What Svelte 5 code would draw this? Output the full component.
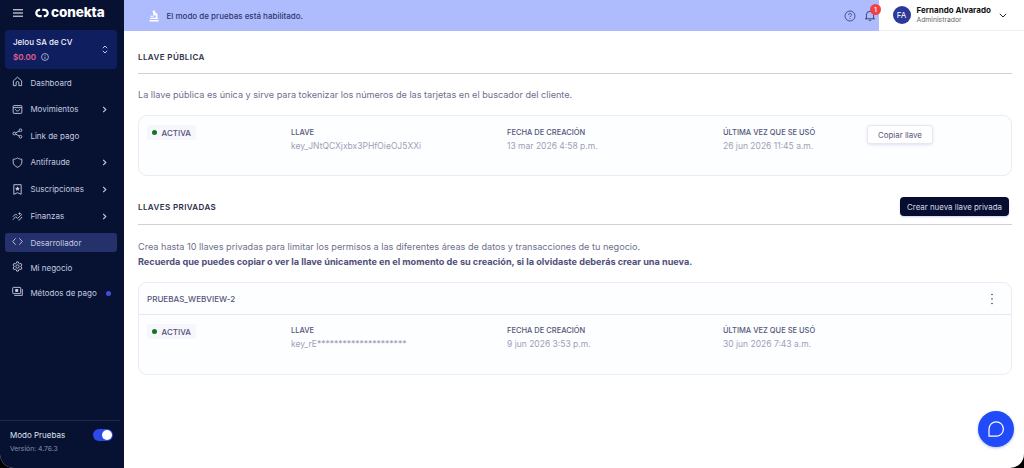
<script lang="ts">
    type NavItem = { label: string; icon: string; submenu?: boolean; active?: boolean; dot?: boolean };

    const navItems: NavItem[] = [
        { label: "Dashboard", icon: "home" },
        { label: "Movimientos", icon: "inbox", submenu: true },
        { label: "Link de pago", icon: "share" },
        { label: "Antifraude", icon: "shield", submenu: true },
        { label: "Suscripciones", icon: "bookmark", submenu: true },
        { label: "Finanzas", icon: "finance", submenu: true },
        { label: "Desarrollador", icon: "code", active: true },
        { label: "Mi negocio", icon: "gear" },
        { label: "Métodos de pago", icon: "cash", dot: true },
    ];

    const publicKey = {
        key: "key_JNtQCXjxbx3PHfOieOJ5XXi",
        created: "13 mar 2026 4:58 p.m.",
        lastUsed: "26 jun 2026 11:45 a.m.",
    };

    const privateKey = {
        name: "PRUEBAS_WEBVIEW-2",
        key: "key_rE*********************",
        created: "9 jun 2026 3:53 p.m.",
        lastUsed: "30 jun 2026 7:43 a.m.",
    };

    let testMode = $state(true);
</script>

{#snippet navIcon(name: string)}
    <svg class="nav-icon {name}" viewBox="0 0 24 24">
        {#if name === "home"}
            <path d="M3 10.5 12 2.5l9 8V21h-6v-6a3 3 0 0 0-6 0v6H3z" />
        {:else if name === "inbox"}
            <rect x="2.5" y="3.5" width="19" height="17" rx="2" />
            <path d="M2.5 8h19M7.500 11.500c.5 5 8.500 5 9 0" />
        {:else if name === "share"}
            <circle cx="5" cy="12" r="3" />
            <circle cx="18.500" cy="5" r="3" />
            <circle cx="18.500" cy="19" r="3" />
            <path d="m8 10.500 8-4M8 13.500l8 4" />
        {:else if name === "shield"}
            <path d="M12 2c3 2.200 6 2.800 9.500 3v6c0 5.500-4 9-9.500 11.500C6.500 20 2.500 16.500 2.500 11V5C6 4.800 9 4.200 12 2z" />
        {:else if name === "bookmark"}
            <path d="M4 1.500h16v21l-8-3.500-8 3.500z" />
            <path class="solid" d="m12 5 1.600 3.300 3.600.5-2.600 2.500.6 3.600-3.200-1.700-3.200 1.700.6-3.600-2.600-2.500 3.600-.5z" />
        {:else if name === "finance"}
            <path d="m2 19 6-6.500 4.500 3.500L22 7M2 12.500l6-6 3.500 3.500M14 20l3-1 5-6" />
            <path d="M16.500 3v5M14 5.500h5" />
        {:else if name === "code"}
            <path d="m8 5-6.500 7L8 19M16 5l6.500 7-6.500 7" />
        {:else if name === "gear"}
            <path d="m10 2-.6 3-2.300 1.300-2.900-1-2 3.500 2.300 2V13.200l-2.300 2 2 3.500 2.900-1L9.400 19l.6 3h4l.6-3 2.300-1.300 2.900 1 2-3.500-2.300-2v-2.400l2.300-2-2-3.500-2.900 1L14.600 5 14 2z" />
            <circle cx="12" cy="12" r="3.600" />
        {:else if name === "cash"}
            <rect x="1.500" y="3" width="17.500" height="13.500" rx="1.500" />
            <path d="M22.500 6.500V20.500H5" />
            <rect class="solid" x="7" y="6.500" width="6.500" height="6.500" rx="1" />
        {/if}
    </svg>
{/snippet}

{#snippet keyDetails(item: { key: string; created: string; lastUsed: string })}
    <div><span class="badge"><i></i>ACTIVA</span></div>
    <dl>
        <dt>LLAVE</dt>
        <dd>{item.key}</dd>
    </dl>
    <dl>
        <dt>FECHA DE CREACIÓN</dt>
        <dd>{item.created}</dd>
    </dl>
    <dl>
        <dt>ÚLTIMA VEZ QUE SE USÓ</dt>
        <dd>{item.lastUsed}</dd>
    </dl>
{/snippet}

<div class="app">
    <aside>
        <div class="brand">
            <svg class="menu" viewBox="0 0 10 8"><path d="M0 .8h10M0 4h10M0 7.200h10" /></svg>
            <svg class="mark" viewBox="0 0 13 9">
                <path d="M4.800 1.600H4.100a2.900 2.900 0 0 0 0 5.800H6.200M8.200 7.400h.7a2.900 2.900 0 0 0 0-5.800H6.800" />
            </svg>
            <span class="logo">conekta</span>
        </div>

        <div class="account">
            <div>
                <div class="company">Jelou SA de CV</div>
                <div class="balance">
                    $0.00
                    <svg viewBox="0 0 10 10"><circle cx="5" cy="5" r="4.300" /><path d="M5 4.500v3M5 2.500v1" /></svg>
                </div>
            </div>
            <svg class="sort" viewBox="0 0 6 9"><path d="M.8 3.200 3 1l2.200 2.200M.8 5.800 3 8l2.200-2.200" /></svg>
        </div>

        <nav>
            {#each navItems as item}
                <div class="nav-item" class:active={item.active}>
                    {@render navIcon(item.icon)}
                    <span class="nav-label">{item.label}</span>
                    {#if item.submenu}
                        <svg class="chevron" viewBox="0 0 5 8"><path d="m1 1 3 3-3 3" /></svg>
                    {/if}
                    {#if item.dot}<i class="dot"></i>{/if}
                </div>
            {/each}
        </nav>

        <footer>
            <div>
                <div class="mode">Modo Pruebas</div>
                <div class="version">Versión: 4.76.3</div>
            </div>
            <button
                class="toggle"
                class:on={testMode}
                aria-label="Modo Pruebas"
                onclick={() => (testMode = !testMode)}
            ></button>
        </footer>
    </aside>

    <main>
        <header>
            <div class="banner">
                <svg class="scope" viewBox="0 0 10 12">
                    <path d="M3.500 1 5.500.2l1.200 2.600c1.800.7 2.600 3.200 1.200 5H9.300V9H1V7.800h5c1.100-.7 1.300-2 .5-2.900L4.700 6z" />
                    <path d="M.5 10h9v1.500h-9zM1.500 5.700h3v1h-3z" />
                </svg>
                <span class="banner-text">El modo de pruebas está habilitado.</span>
                <svg class="help" viewBox="0 0 12 12">
                    <circle cx="6" cy="6" r="5" />
                    <path d="M4.500 4.900C4.500 2.700 7.600 2.900 7.500 4.800 7.400 5.800 6 5.900 6 7.100M6 8.200v.8" />
                </svg>
                <div class="bell">
                    <svg viewBox="0 0 12 12">
                        <path d="M1 9.300h10M2.400 9.300V5.400a3.600 3.600 0 0 1 7.200 0v3.900M4.800 10.800h2.400" />
                    </svg>
                    <span class="count">1</span>
                </div>
            </div>
            <div class="user">
                <div class="avatar">FA</div>
                <div class="who">
                    <div class="name">Fernando Alvarado</div>
                    <div class="role">Administrador</div>
                </div>
                <svg class="down" viewBox="0 0 8 5"><path d="m.8.8 3.200 3.200L7.200.8" /></svg>
            </div>
        </header>

        <div class="content">
            <div class="section-head public">
                <h2>LLAVE PÚBLICA</h2>
            </div>
            <p class="public-text">
                La llave pública es única y sirve para tokenizar los números de las tarjetas en el buscador del cliente.
            </p>
            <div class="card">
                <div class="key-row public-row">
                    {@render keyDetails(publicKey)}
                    <div><button class="copy">Copiar llave</button></div>
                </div>
            </div>

            <div class="section-head private">
                <h2>LLAVES PRIVADAS</h2>
                <button class="create">Crear nueva llave privada</button>
            </div>
            <p class="private-text">
                Crea hasta 10 llaves privadas para limitar los permisos a las diferentes áreas de datos y transacciones de tu negocio.
                <strong>Recuerda que puedes copiar o ver la llave únicamente en el momento de su creación, si la olvidaste deberás crear una nueva.</strong>
            </p>
            <div class="card">
                <div class="card-head">
                    <span>{privateKey.name}</span>
                    <svg class="more" viewBox="0 0 4 12">
                        <circle cx="2" cy="1.500" r=".8" /><circle cx="2" cy="6" r=".8" /><circle cx="2" cy="10.500" r=".8" />
                    </svg>
                </div>
                <div class="key-row">
                    {@render keyDetails(privateKey)}
                </div>
            </div>
        </div>
    </main>

    <button class="chat" aria-label="Chat">
        <svg viewBox="0 0 18 18"><path d="M2 16.200V9a7.200 7.200 0 1 1 7.200 7.200z" /></svg>
    </button>
</div>

<style>
    :global(body) {
        background: #000;
    }

    .app {
        display: flex;
        position: relative;
        width: 1024px;
        height: 468px;
        overflow: hidden;
        background: #fff;
        border-radius: 0 0 14px 14px;
        font-family: Inter, sans-serif;
        box-sizing: border-box;
    }

    .app :global(*) {
        box-sizing: border-box;
    }

    svg {
        display: block;
        flex: none;
        fill: none;
        stroke: currentColor;
    }

    button {
        padding: 0;
        border: 0;
        font-family: inherit;
    }

    aside {
        display: flex;
        flex-direction: column;
        flex: none;
        width: 124px;
        background: #071232;
        color: #c3cae0;
    }

    .brand {
        display: flex;
        align-items: center;
        height: 30px;
        padding: 0 0 5px 13px;
        color: #fff;
    }

    .menu {
        width: 10px;
        height: 8px;
        margin-right: 12px;
    }

    .mark {
        width: 14px;
        height: 10px;
        stroke-width: 2.1;
    }

    .logo {
        margin: -1px 0 0 2px;
        font-size: 13.5px;
        font-weight: 800;
        line-height: 14px;
        letter-spacing: -0.1px;
    }

    .account {
        display: flex;
        align-items: center;
        justify-content: space-between;
        height: 39px;
        margin: 0 7px 0 5px;
        padding: 0 9px 0 8px;
        border-radius: 4px;
        background: #0f1e5f;
    }

    .company {
        color: #f0f2fb;
        font-size: 8px;
        font-weight: 500;
        line-height: 15px;
    }

    .balance {
        display: flex;
        align-items: center;
        gap: 5px;
        color: #e0608c;
        font-size: 8px;
        font-weight: 600;
        line-height: 15px;
    }

    .balance svg {
        width: 8px;
        height: 8px;
        color: #c3cae0;
    }

    .sort {
        width: 6px;
        height: 9px;
    }

    nav {
        display: grid;
        grid-template-rows: 27px 26px 27px 26px 28px 26px 27px 24px 26px;
        margin: 0 7px 0 5px;
        align-items: center;
    }

    .nav-item {
        display: flex;
        align-items: center;
        height: 19px;
        padding: 0 10px 0 7px;
        border-radius: 3px;
        font-size: 8px;
    }

    .nav-item.active {
        background: #25316b;
    }

    .nav-icon {
        width: 11px;
        height: 11px;
        margin-right: 7.4px;
        stroke-width: 2;
    }

    .nav-icon.home,
    .nav-icon.code,
    .nav-icon.gear,
    .nav-icon.cash {
        margin-bottom: 3px;
    }

    .nav-icon.share {
        margin-bottom: 4px;
    }

    .solid {
        fill: currentColor;
        stroke: none;
    }

    .nav-label {
        flex: 1;
        white-space: nowrap;
    }

    .chevron {
        width: 5px;
        height: 7px;
        stroke-width: 1.3;
    }

    .dot {
        width: 5px;
        height: 5px;
        margin-right: -4px;
        border-radius: 50%;
        background: #414ce0;
    }

    footer {
        display: flex;
        justify-content: space-between;
        height: 48px;
        margin: auto 4px 0 0;
        padding: 7px 7px 0 10px;
        border-top: 1px solid #1d2948;
    }

    .mode {
        color: #dfe3f0;
        font-size: 8px;
        line-height: 14px;
    }

    .version {
        color: #8890ab;
        font-size: 6.8px;
        line-height: 14px;
    }

    .toggle {
        display: flex;
        align-items: center;
        width: 20px;
        height: 12px;
        margin-top: 1px;
        padding: 1px;
        border-radius: 6px;
        background: #56607c;
    }

    .toggle::after {
        content: "";
        width: 10px;
        height: 10px;
        border-radius: 50%;
        background: #fff;
    }

    .toggle.on {
        justify-content: flex-end;
        background: #2c4ae8;
    }

    main {
        flex: 1;
        min-width: 0;
    }

    header {
        display: flex;
        height: 31px;
        border-bottom: 1px solid #f1f1f3;
    }

    .banner {
        display: flex;
        align-items: center;
        width: 755px;
        height: 31px;
        padding: 0 3px 0 25px;
        background: #aebcfd;
        color: #2e356e;
    }

    .scope {
        width: 10px;
        height: 12px;
        margin-right: 7.5px;
        fill: #fff;
        stroke: none;
    }

    .banner-text {
        flex: 1;
        font-size: 8px;
        font-weight: 500;
    }

    .help {
        width: 12px;
        height: 12px;
        margin-right: 8px;
        stroke-width: 0.8;
    }

    .bell {
        position: relative;
    }

    .bell svg {
        width: 12px;
        height: 13px;
        stroke-width: 0.9;
    }

    .count {
        position: absolute;
        top: -5px;
        left: 6px;
        width: 11px;
        height: 11px;
        border-radius: 50%;
        background: #f04143;
        color: #fff;
        font-size: 6px;
        font-weight: 600;
        line-height: 11px;
        text-align: center;
    }

    .user {
        display: flex;
        align-items: center;
        padding-left: 13.5px;
    }

    .avatar {
        width: 18px;
        height: 18px;
        border-radius: 50%;
        background: #2b3a99;
        color: #fff;
        font-size: 8px;
        line-height: 18px;
        text-align: center;
    }

    .who {
        width: 82px;
        margin-left: 6px;
        padding-bottom: 1px;
        white-space: nowrap;
    }

    .name {
        color: #111;
        font-size: 8px;
        font-weight: 700;
        line-height: 10px;
    }

    .role {
        color: #666;
        font-size: 6.8px;
        line-height: 10px;
    }

    .down {
        width: 8px;
        height: 5px;
        color: #222;
    }

    .content {
        padding: 0 12px 0 14px;
    }

    .section-head {
        display: flex;
        align-items: center;
        justify-content: space-between;
        border-bottom: 1px solid #d0d1d8;
    }

    .section-head.public {
        height: 43px;
        padding-top: 9px;
    }

    .section-head.private {
        height: 49px;
        padding: 13px 3px 0 0;
    }

    h2 {
        margin: 0;
        color: #2b2f49;
        font-size: 8px;
        font-weight: 600;
        letter-spacing: 0.4px;
    }

    p {
        margin: 0;
        color: #6d6f8b;
        font-size: 9.12px;
        line-height: 15px;
        white-space: nowrap;
    }

    .public-text {
        padding: 13px 0;
    }

    .private-text {
        padding: 14px 0 13px;
    }

    strong {
        display: block;
        color: #504f7a;
        font-size: 9.12px;
        font-weight: 700;
    }

    .card {
        border: 1px solid #e9ecf1;
        border-radius: 9px;
        background: #fdfeff;
    }

    .card-head {
        display: flex;
        align-items: center;
        justify-content: space-between;
        height: 32px;
        padding: 0 17px 0 8px;
        border-bottom: 1px solid #e5e8ef;
        color: #54567a;
        font-size: 8.05px;
        font-weight: 500;
    }

    .more {
        width: 4px;
        height: 12px;
        fill: #444;
        stroke: none;
    }

    .key-row {
        display: grid;
        grid-template-columns: 144px 216px 216px 144px 1fr;
        height: 59px;
        padding: 9px 0 0 8px;
    }

    .badge {
        display: flex;
        align-items: center;
        gap: 4.5px;
        width: 49px;
        height: 15px;
        padding-left: 5px;
        border-radius: 3px;
        background: #f6f6fc;
        color: #505176;
        font-size: 8px;
        font-weight: 500;
    }

    .badge i {
        width: 5px;
        height: 5px;
        border-radius: 50%;
        background: #13761f;
    }

    dl {
        margin: 0;
        white-space: nowrap;
    }

    .public-row dl {
        padding-top: 1px;
    }

    dt {
        color: #54567a;
        font-size: 7.5px;
        font-weight: 500;
        line-height: 14px;
    }

    dd {
        margin: 0;
        color: #9c9eb9;
        font-size: 8.5px;
        line-height: 13px;
    }

    .copy {
        display: block;
        width: 66px;
        height: 19px;
        border: 1px solid #e6e7f4;
        border-radius: 3px;
        background: #fff;
        box-shadow: 0 1px 3px #dfe2f5;
        color: #55567a;
        font-size: 7.9px;
    }

    .create {
        width: 109px;
        height: 19px;
        border-radius: 4px;
        background: #060d2e;
        box-shadow: 0 1px 2px #cfd3ee;
        color: #d6d9ea;
        font-size: 7.9px;
        white-space: nowrap;
    }

    .chat {
        position: absolute;
        right: 10px;
        bottom: 21px;
        display: grid;
        place-items: center;
        width: 36px;
        height: 36px;
        border-radius: 50%;
        background: #214bf8;
        box-shadow: 0 1px 3px #b6bde6;
        color: #fff;
    }

    .chat svg {
        width: 18px;
        height: 18px;
        stroke-width: 1.2;
    }
</style>
